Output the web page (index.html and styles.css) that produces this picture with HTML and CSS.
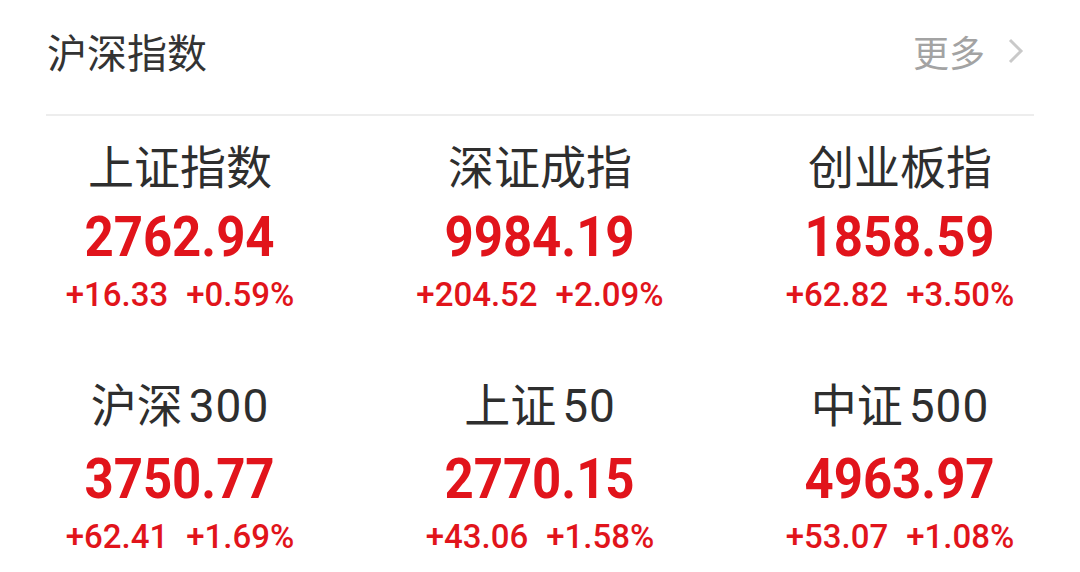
FILE: index.html
```html
<!DOCTYPE html>
<html lang="zh-CN">
<head>
<meta charset="utf-8">
<title>沪深指数</title>
<link rel="stylesheet" href="styles.css">
</head>
<body>
<div class="panel">
  <div class="header">
    <div class="title">沪深指数</div>
    <div class="more">更多<svg class="chev" width="18" height="28" viewBox="0 0 18 28"><path d="M3 3 L14 14 L3 25" fill="none" stroke="#c9c9c9" stroke-width="3"/></svg></div>
  </div>
  <div class="grid">
    <div class="cell">
      <div class="name">上证指数</div>
      <div class="value"><span>2762.94</span></div>
      <div class="change"><span>+16.33</span><span>+0.59%</span></div>
    </div>
    <div class="cell">
      <div class="name">深证成指</div>
      <div class="value"><span>9984.19</span></div>
      <div class="change"><span>+204.52</span><span>+2.09%</span></div>
    </div>
    <div class="cell">
      <div class="name">创业板指</div>
      <div class="value"><span>1858.59</span></div>
      <div class="change"><span>+62.82</span><span>+3.50%</span></div>
    </div>
    <div class="cell">
      <div class="name">沪深<span class="num">300</span></div>
      <div class="value"><span>3750.77</span></div>
      <div class="change"><span>+62.41</span><span>+1.69%</span></div>
    </div>
    <div class="cell">
      <div class="name">上证<span class="num">50</span></div>
      <div class="value"><span>2770.15</span></div>
      <div class="change"><span>+43.06</span><span>+1.58%</span></div>
    </div>
    <div class="cell">
      <div class="name">中证<span class="num">500</span></div>
      <div class="value"><span>4963.97</span></div>
      <div class="change"><span>+53.07</span><span>+1.08%</span></div>
    </div>
  </div>
</div>
</body>
</html>
```
FILE: styles.css
```css
html, body {
  margin: 0;
  padding: 0;
  background: #ffffff;
}
body {
  width: 1080px;
  height: 572px;
  overflow: hidden;
  font-family: "Noto Sans CJK SC", "Noto Sans", sans-serif;
}
.header {
  margin: 0 46px;
  height: 116px;
  border-bottom: 2px solid #ededed;
  display: flex;
  align-items: center;
  justify-content: space-between;
  box-sizing: border-box;
  padding: 0 0 12px 1px;
}
.title {
  font-size: 40px;
  color: #333333;
  line-height: 1;
}
.more {
  font-size: 36px;
  color: #a3a3a3;
  line-height: 1;
  display: flex;
  align-items: center;
  gap: 22px;
  padding-right: 9px;
}
.grid {
  display: grid;
  grid-template-columns: repeat(3, 360px);
  grid-template-rows: 238px auto;
  padding-top: 20px;
}
.cell {
  display: flex;
  flex-direction: column;
  align-items: center;
}
.name {
  font-size: 46px;
  line-height: 56px;
  color: #2e2e2e;
}
.name .num {
  font-family: "Roboto", "Noto Sans", sans-serif;
  margin-left: 6px;
  letter-spacing: 1px;
}
.value {
  margin-top: 15px;
  font-family: "Roboto", "Liberation Sans", sans-serif;
  font-weight: bold;
  font-size: 56px;
  line-height: 60px;
  color: #e1141b;
}
.value span {
  display: inline-block;
  transform: scaleX(0.91);
}
.change {
  margin-top: 10px;
  display: flex;
  gap: 18px;
  font-family: "Roboto", "Liberation Sans", sans-serif;
  font-weight: 500;
  font-size: 33px;
  line-height: 36px;
  color: #e1141b;
}
```
